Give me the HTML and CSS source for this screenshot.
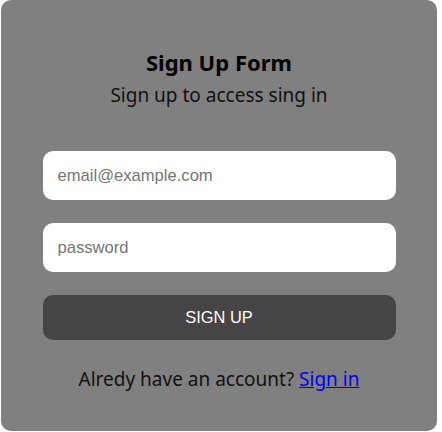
FILE: index.html
```html
<!DOCTYPE html>
<html lang="en">
    <head>
        <meta charset="UTF-8">
        <meta name="viewport" content="width=device-width, initial-scale=1.0">
        <title>Sign Up</title>
        <link rel="stylesheet" href="styles.css">
    </head>
    <body>
        <div class="card">
            <h1>Sign Up Form</h1>
            <p class="sub">Sign up to access sing in</p>
            <form class="form">
                <input type="email" placeholder="email@example.com">
                <input type="password" placeholder="password">
                <input type="button" value="SIGN UP">
            </form>
            <p class="footer">Alredy have an account? <a href="#">Sign in</a></p>
        </div>
    </body>
</html>
```

FILE: styles.css
```css
body {
    margin: 0;
    background-color: #ffffff;
    font-family: "Noto Sans", sans-serif;
}

.card {
    width: 436px;
    height: 431px;
    margin-left: 1px;
    box-sizing: border-box;
    background-color: #808080;
    border-radius: 10px;
    display: flex;
    flex-direction: column;
    align-items: center;
    padding-top: 48px;
}

h1 {
    margin: 0;
    font-size: 22px;
    line-height: 28px;
    color: #000000;
}

.sub {
    margin: 6px 0 0;
    font-size: 19px;
    line-height: 26px;
    color: #111111;
}

.form {
    display: flex;
    flex-direction: column;
    gap: 23px;
    margin-top: 43px;
}

input[type="email"], input[type="password"] {
    width: 353px;
    height: 49px;
    box-sizing: border-box;
    padding: 0 15px;
    border: none;
    border-radius: 10px;
    background-color: #ffffff;
    font-family: "Liberation Sans", Arial, sans-serif;
    font-size: 16.6px;
}

input::placeholder {
    color: #757575;
}

input[type="button"] {
    width: 353px;
    height: 45px;
    border: none;
    border-radius: 10px;
    background-color: #454545;
    color: #ffffff;
    font-family: "Liberation Sans", Arial, sans-serif;
    font-size: 16.4px;
}

.footer {
    margin: 26px 0 0;
    font-size: 19px;
    line-height: 26px;
    color: #111111;
}

.footer a {
    color: #0000ee;
}
```
